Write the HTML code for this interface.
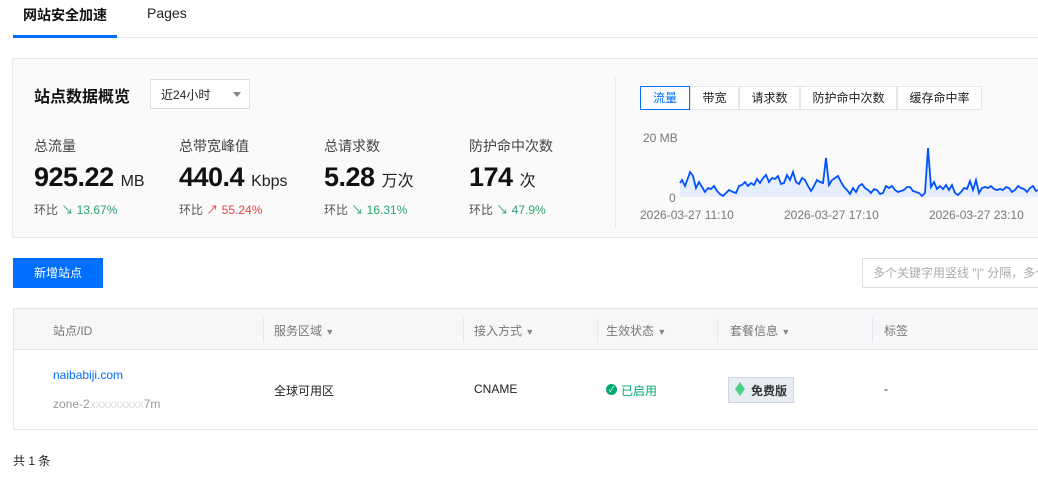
<!DOCTYPE html>
<html><head><meta charset="utf-8"><style>
*{margin:0;padding:0;box-sizing:border-box}
body{width:1038px;height:482px;overflow:hidden;background:#fff;font-family:"Liberation Sans","Noto Sans CJK SC",sans-serif;color:#222;font-size:12px;position:relative}
.a{position:absolute;white-space:nowrap}
.lbl{font-size:14px;color:#444}
.num{font-size:27px;font-weight:bold;color:#111;letter-spacing:-0.5px}
.unit{font-size:16px;color:#222;font-weight:normal;letter-spacing:0}
.hb{font-size:12px;color:#555}
.g{color:#2ba471}.r{color:#e54545}
.th{font-size:12px;color:#777}
.th small{font-size:9px;color:#888}
.sep{position:absolute;top:318px;width:1px;height:24px;background:#e4e6eb}
.tab{position:absolute;top:86px;height:24px;border:1px solid #e4e6eb;font-size:12px;line-height:22px;text-align:center;color:#222;background:#fff}
</style></head><body>
<div class="a" style="left:23px;top:5px;font-size:14px;font-weight:bold;color:#111">网站安全加速</div>
<div class="a" style="left:147px;top:5px;font-size:14px;color:#222">Pages</div>
<div class="a" style="left:13px;top:37px;width:1025px;height:1px;background:#e7e8eb"></div>
<div class="a" style="left:13px;top:35px;width:104px;height:3px;background:#006eff"></div>

<div class="a" style="left:12px;top:58px;width:1030px;height:180px;background:#fafafa;border:1px solid #e7e7e7"></div>
<div class="a" style="left:615px;top:78px;width:1px;height:150px;background:#e7e7e7"></div>
<div class="a" style="left:34px;top:83px;font-size:16px;font-weight:bold;color:#111">站点数据概览</div>
<div class="a" style="left:150px;top:79px;width:100px;height:30px;border:1px solid #dcdfe6;background:#fff"></div>
<div class="a" style="left:161px;top:86px;font-size:12px;color:#222">近24小时</div>
<div class="a" style="left:233px;top:92px;width:0;height:0;border-left:4px solid transparent;border-right:4px solid transparent;border-top:5px solid #888"></div>

<div class="a lbl" style="left:34px;top:136px">总流量</div>
<div class="a lbl" style="left:179px;top:136px">总带宽峰值</div>
<div class="a lbl" style="left:324px;top:136px">总请求数</div>
<div class="a lbl" style="left:469px;top:136px">防护命中次数</div>
<div class="a num" style="left:34px;top:162px">925.22 <span class="unit">MB</span></div>
<div class="a num" style="left:179px;top:162px">440.4 <span class="unit">Kbps</span></div>
<div class="a num" style="left:324px;top:162px">5.28 <span class="unit">万次</span></div>
<div class="a num" style="left:469px;top:162px">174 <span class="unit">次</span></div>
<div class="a hb" style="left:34px;top:201px">环比 <span class="g">↘ 13.67%</span></div>
<div class="a hb" style="left:179px;top:201px">环比 <span class="r">↗ 55.24%</span></div>
<div class="a hb" style="left:324px;top:201px">环比 <span class="g">↘ 16.31%</span></div>
<div class="a hb" style="left:469px;top:201px">环比 <span class="g">↘ 47.9%</span></div>

<div class="tab" style="left:640px;width:50px;border-color:#006eff;color:#006eff">流量</div>
<div class="tab" style="left:690px;width:49px">带宽</div>
<div class="tab" style="left:739px;width:61px">请求数</div>
<div class="tab" style="left:800px;width:97px">防护命中次数</div>
<div class="tab" style="left:897px;width:85px">缓存命中率</div>
<div class="a" style="left:643px;top:131px;font-size:12px;color:#777">20 MB</div>
<div class="a" style="left:669px;top:191px;font-size:12px;color:#777">0</div>
<svg class="a" style="left:0;top:0" width="1038" height="240">
<polygon fill="#e6edfc" points="680,183 682,180 685,186 688,178 690,172 693,176 696,188 699,182 702,187 705,192 708,188 711,189 714,186 717,191 720,194 723,196 726,193 729,190 733,192 736,193 739,186 742,185 745,182 748,186 751,183 754,185 757,179 760,183 763,178 766,175 769,182 772,178 775,179 778,176 781,184 784,183 787,175 790,180 793,172 796,182 799,184 802,178 805,180 808,186 811,191 814,186 817,180 820,182 823,183 826,158 829,185 832,180 835,178 838,176 841,182 844,187 847,190 850,194 853,188 856,192 859,186 862,184 865,188 868,190 871,193 874,189 877,190 880,194 883,193 886,186 889,188 892,186 895,190 898,192 901,191 904,190 907,187 910,187 913,191 916,192 919,193 922,196 925,193 928,148 931,187 934,182 937,189 940,186 943,189 946,185 949,190 952,185 955,193 958,195 961,192 964,188 967,189 970,181 973,190 976,180 979,193 982,188 985,187 988,188 991,186 994,189 997,190 1000,189 1003,190 1006,187 1009,188 1012,192 1015,190 1018,186 1021,188 1024,189 1027,192 1030,188 1033,186 1036,191 1038,190 1038,197 680,197"/>
<polyline fill="none" stroke="#0052ff" stroke-width="1.8" points="680,183 682,180 685,186 688,178 690,172 693,176 696,188 699,182 702,187 705,192 708,188 711,189 714,186 717,191 720,194 723,196 726,193 729,190 733,192 736,193 739,186 742,185 745,182 748,186 751,183 754,185 757,179 760,183 763,178 766,175 769,182 772,178 775,179 778,176 781,184 784,183 787,175 790,180 793,172 796,182 799,184 802,178 805,180 808,186 811,191 814,186 817,180 820,182 823,183 826,158 829,185 832,180 835,178 838,176 841,182 844,187 847,190 850,194 853,188 856,192 859,186 862,184 865,188 868,190 871,193 874,189 877,190 880,194 883,193 886,186 889,188 892,186 895,190 898,192 901,191 904,190 907,187 910,187 913,191 916,192 919,193 922,196 925,193 928,148 931,187 934,182 937,189 940,186 943,189 946,185 949,190 952,185 955,193 958,195 961,192 964,188 967,189 970,181 973,190 976,180 979,193 982,188 985,187 988,188 991,186 994,189 997,190 1000,189 1003,190 1006,187 1009,188 1012,192 1015,190 1018,186 1021,188 1024,189 1027,192 1030,188 1033,186 1036,191 1038,190"/>
</svg>
<div class="a" style="left:640px;top:208px;font-size:12px;color:#777">2026-03-27 11:10</div>
<div class="a" style="left:784px;top:208px;font-size:12px;color:#777">2026-03-27 17:10</div>
<div class="a" style="left:929px;top:208px;font-size:12px;color:#777">2026-03-27 23:10</div>

<div class="a" style="left:13px;top:258px;width:90px;height:30px;background:#006eff;color:#fff;font-size:12px;line-height:30px;text-align:center">新增站点</div>
<div class="a" style="left:862px;top:258px;width:190px;height:30px;border:1px solid #dcdfe6;background:#fff;color:#aaa;font-size:12px;line-height:28px;padding-left:10px">多个关键字用竖线 "|" 分隔，多个过滤</div>

<div class="a" style="left:13px;top:308px;width:1030px;height:122px;border:1px solid #e4e6eb"></div>
<div class="a" style="left:14px;top:309px;width:1030px;height:41px;background:#f6f7f9;border-bottom:1px solid #e4e6eb"></div>
<div class="sep" style="left:263px"></div><div class="sep" style="left:463px"></div><div class="sep" style="left:597px"></div><div class="sep" style="left:717px"></div><div class="sep" style="left:872px"></div>
<div class="a th" style="left:53px;top:322px">站点/ID</div>
<div class="a th" style="left:274px;top:322px">服务区域 <small>▼</small></div>
<div class="a th" style="left:474px;top:322px">接入方式 <small>▼</small></div>
<div class="a th" style="left:606px;top:322px">生效状态 <small>▼</small></div>
<div class="a th" style="left:730px;top:322px">套餐信息 <small>▼</small></div>
<div class="a th" style="left:884px;top:322px">标签</div>

<div class="a" style="left:53px;top:368px;color:#006eff">naibabiji.com</div>
<div class="a" style="left:53px;top:397px;color:#999">zone-2<span style="color:#ddd">xxxxxxxxx</span>7m</div>
<div class="a" style="left:274px;top:382px">全球可用区</div>
<div class="a" style="left:474px;top:382px">CNAME</div>
<div class="a" style="left:606px;top:384px;width:11px;height:11px;border-radius:50%;background:#00a870;color:#fff;font-size:8px;line-height:11px;text-align:center">✓</div>
<div class="a" style="left:621px;top:382px;color:#00a870">已启用</div>
<div class="a" style="left:728px;top:377px;width:66px;height:26px;background:#e8ecf3;border:1px solid #cdd5e3"></div>
<div class="a" style="left:735px;top:382px;width:10px;height:14px;background:#4ad28a;clip-path:polygon(50% 0,100% 50%,50% 100%,0 50%)"></div>
<div class="a" style="left:751px;top:382px;font-weight:bold;color:#333">免费版</div>
<div class="a" style="left:884px;top:382px">-</div>

<div class="a" style="left:13px;top:452px;color:#222">共 1 条</div>
</body></html>
